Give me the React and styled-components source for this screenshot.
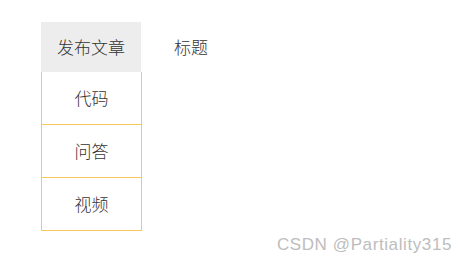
import React from 'react'
import styled, { createGlobalStyle } from 'styled-components'

const Global = createGlobalStyle`
	body {
		margin: 0;
		background: #fff;
		font-family: "Noto Sans CJK SC", "Liberation Sans", sans-serif;
	}
`

const Page = styled.div`
	position: relative;
	width: 467px;
	height: 264px;
	padding: 22px 0 0 41px;
	box-sizing: border-box;
`

const Nav = styled.ul`
	display: flex;
	list-style: none;
	margin: 0;
	padding: 0;
`

const NavItem = styled.li`
	position: relative;
	width: 100px;
`

const NavLabel = styled.div`
	height: 50px;
	line-height: 50px;
	text-align: center;
	font-size: 17px;
	font-weight: 300;
	color: #333;
	background: ${props => (props.active ? '#ededed' : 'transparent')};
`

const Dropdown = styled.ul`
	list-style: none;
	margin: 0;
	padding: 0;
	width: 101px;
	box-sizing: border-box;
	border: 1px solid #f9c85c;
	border-top: none;
`

const DropItem = styled.li`
	height: 52px;
	line-height: 52px;
	text-align: center;
	font-size: 17px;
	font-weight: 300;
	color: #333;
	border-bottom: 1px solid #f9c85c;

	&:last-child {
		border-bottom: none;
	}
`

const Watermark = styled.div`
	position: absolute;
	right: 15px;
	top: 235px;
	font-family: "Liberation Sans", sans-serif;
	font-size: 17px;
	letter-spacing: 0.6px;
	color: #bdbdbd;
`

export default function App() {
	return (
		<Page>
			<Global />
			<Nav>
				<NavItem>
					<NavLabel active>发布文章</NavLabel>
					<Dropdown>
						<DropItem>代码</DropItem>
						<DropItem>问答</DropItem>
						<DropItem>视频</DropItem>
					</Dropdown>
				</NavItem>
				<NavItem>
					<NavLabel>标题</NavLabel>
				</NavItem>
			</Nav>
			<Watermark>CSDN @Partiality315</Watermark>
		</Page>
	)
}
